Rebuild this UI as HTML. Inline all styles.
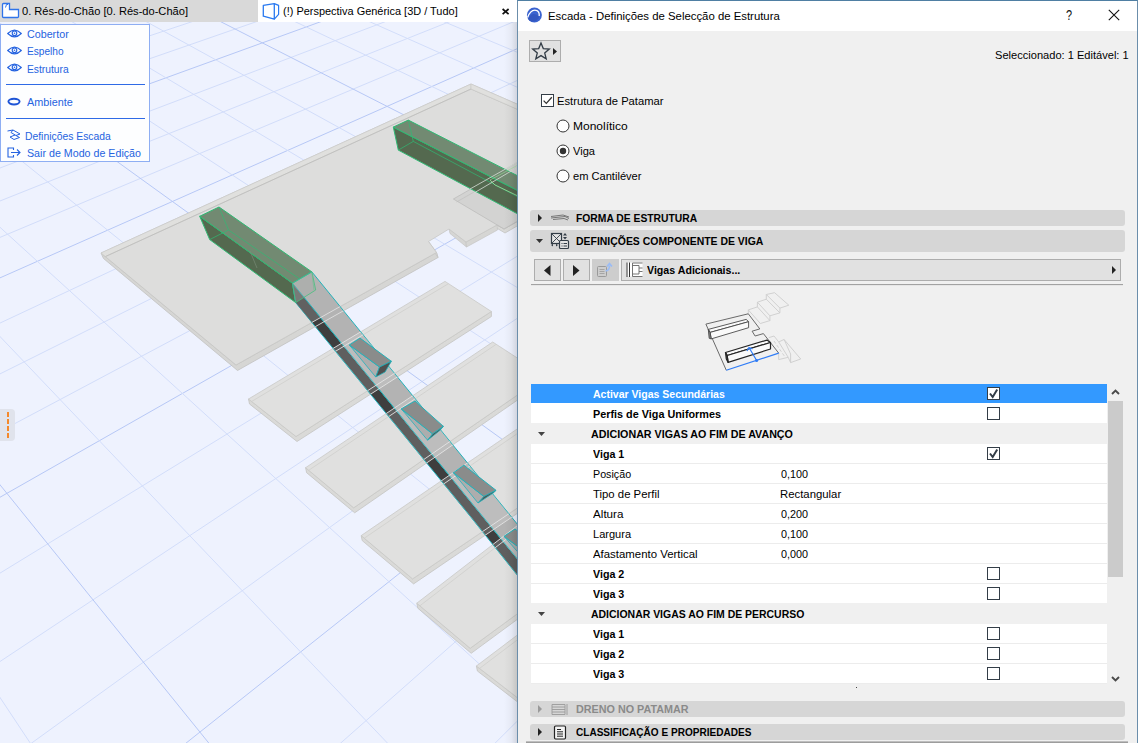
<!DOCTYPE html>
<html lang="pt"><head><meta charset="utf-8"><title>Escada</title>
<style>
html,body{margin:0;padding:0}
body{width:1138px;height:743px;overflow:hidden;position:relative;background:#f0f0f0;font-family:"Liberation Sans", sans-serif;}
.t{position:absolute;white-space:pre;line-height:1;transform-origin:0 0;font-family:"Liberation Sans", sans-serif;}
.abs{position:absolute}

.tabbar{position:absolute;left:0;top:0;width:518px;height:22px;background:#fff}
.tab1{position:absolute;left:0;top:0;width:258px;height:22px;background:#d9d9d9}
.menu{position:absolute;left:0;top:24px;width:148px;height:136px;background:#fdfeff;border:1px solid #8eaef3;box-sizing:content-box}
.sep{position:absolute;left:5.5px;width:139px;height:1px;background:#2f6ae6}
.handle{position:absolute;left:-4px;top:409px;width:19px;height:32px;border-radius:4px;background:#e0e3ec}
.dash{position:absolute;left:7px;width:2px;height:5px;background:#f5882a}
.shadow{position:absolute;left:504px;top:22px;width:13px;height:721px;background:linear-gradient(90deg,rgba(0,0,0,0) 0%,rgba(0,0,0,0.035) 55%,rgba(0,0,0,0.12) 100%)}
.dlg{position:absolute;left:517px;top:0;width:621px;height:743px;background:#f0f0f0;box-sizing:border-box;border-left:1px solid #6b8eab;border-right:1px solid #6b8eab;border-top:1px solid #4f7fa3}
.titlebar{position:absolute;left:518px;top:1px;width:619px;height:30px;background:#fff}
.btn{position:absolute;box-sizing:border-box;border:1px solid #adadad;background:#e1e1e1}
.hdr{position:absolute;left:530px;width:595px;background:#d6d6d6;border-radius:3px}
.row{position:absolute;left:531px;width:576px;height:19px;background:#fff;border-bottom:1px solid #ececec}
.row.g{background:#f0f0f0;border-bottom-color:#f0f0f0}
.row.sel{background:#3399ff;border-bottom-color:#fff}
.row.pg{border-bottom-color:#f0f0f0}
.cbt{border-width:1px !important}
.cb{position:absolute;box-sizing:border-box;width:13px;height:13px;border:1.5px solid #333d47;background:#fff}

</style></head><body>
<svg id="scene" width="518" height="743" viewBox="0 0 518 743" style="position:absolute;left:0;top:0">
<rect x="0" y="0" width="518" height="743" fill="#eef2fe"/>
<line x1="197.1" y1="20" x2="-2027.9" y2="760" stroke="#d2ddfa" stroke-width="1"/>
<line x1="261.2" y1="20" x2="-1871.3" y2="760" stroke="#d2ddfa" stroke-width="1"/>
<line x1="325.4" y1="20" x2="-1714.7" y2="760" stroke="#b7c8f6" stroke-width="1"/>
<line x1="389.5" y1="20" x2="-1558.0" y2="760" stroke="#d2ddfa" stroke-width="1"/>
<line x1="453.7" y1="20" x2="-1401.4" y2="760" stroke="#d2ddfa" stroke-width="1"/>
<line x1="517.8" y1="20" x2="-1244.8" y2="760" stroke="#d2ddfa" stroke-width="1"/>
<line x1="582.0" y1="20" x2="-1088.2" y2="760" stroke="#b7c8f6" stroke-width="1"/>
<line x1="646.1" y1="20" x2="-931.5" y2="760" stroke="#d2ddfa" stroke-width="1"/>
<line x1="710.3" y1="20" x2="-774.9" y2="760" stroke="#d2ddfa" stroke-width="1"/>
<line x1="774.4" y1="20" x2="-618.3" y2="760" stroke="#d2ddfa" stroke-width="1"/>
<line x1="838.6" y1="20" x2="-461.7" y2="760" stroke="#b7c8f6" stroke-width="1"/>
<line x1="902.8" y1="20" x2="-305.0" y2="760" stroke="#d2ddfa" stroke-width="1"/>
<line x1="966.9" y1="20" x2="-148.4" y2="760" stroke="#d2ddfa" stroke-width="1"/>
<line x1="1031.1" y1="20" x2="8.2" y2="760" stroke="#d2ddfa" stroke-width="1"/>
<line x1="1095.2" y1="20" x2="164.8" y2="760" stroke="#b7c8f6" stroke-width="1"/>
<line x1="1159.4" y1="20" x2="321.5" y2="760" stroke="#d2ddfa" stroke-width="1"/>
<line x1="1223.5" y1="20" x2="478.1" y2="760" stroke="#d2ddfa" stroke-width="1"/>
<line x1="1287.7" y1="20" x2="634.7" y2="760" stroke="#d2ddfa" stroke-width="1"/>
<line x1="1351.8" y1="20" x2="791.3" y2="760" stroke="#b7c8f6" stroke-width="1"/>
<line x1="1416.0" y1="20" x2="947.9" y2="760" stroke="#d2ddfa" stroke-width="1"/>
<line x1="-969.1" y1="20" x2="-1225.9" y2="760" stroke="#b7c8f6" stroke-width="1"/>
<line x1="-895.0" y1="20" x2="-1044.8" y2="760" stroke="#d2ddfa" stroke-width="1"/>
<line x1="-820.8" y1="20" x2="-863.8" y2="760" stroke="#d2ddfa" stroke-width="1"/>
<line x1="-746.7" y1="20" x2="-682.7" y2="760" stroke="#d2ddfa" stroke-width="1"/>
<line x1="-672.5" y1="20" x2="-501.7" y2="760" stroke="#b7c8f6" stroke-width="1"/>
<line x1="-598.3" y1="20" x2="-320.6" y2="760" stroke="#d2ddfa" stroke-width="1"/>
<line x1="-524.2" y1="20" x2="-139.6" y2="760" stroke="#d2ddfa" stroke-width="1"/>
<line x1="-450.0" y1="20" x2="41.5" y2="760" stroke="#d2ddfa" stroke-width="1"/>
<line x1="-375.8" y1="20" x2="222.5" y2="760" stroke="#b7c8f6" stroke-width="1"/>
<line x1="-301.7" y1="20" x2="403.6" y2="760" stroke="#d2ddfa" stroke-width="1"/>
<line x1="-227.5" y1="20" x2="584.7" y2="760" stroke="#d2ddfa" stroke-width="1"/>
<line x1="-153.4" y1="20" x2="765.7" y2="760" stroke="#d2ddfa" stroke-width="1"/>
<line x1="-79.2" y1="20" x2="946.8" y2="760" stroke="#b7c8f6" stroke-width="1"/>
<line x1="-5.0" y1="20" x2="1127.8" y2="760" stroke="#d2ddfa" stroke-width="1"/>
<line x1="69.1" y1="20" x2="1308.9" y2="760" stroke="#d2ddfa" stroke-width="1"/>
<line x1="143.3" y1="20" x2="1489.9" y2="760" stroke="#d2ddfa" stroke-width="1"/>
<line x1="217.4" y1="20" x2="1671.0" y2="760" stroke="#b7c8f6" stroke-width="1"/>
<line x1="291.6" y1="20" x2="1852.0" y2="760" stroke="#d2ddfa" stroke-width="1"/>
<line x1="365.8" y1="20" x2="2033.1" y2="760" stroke="#d2ddfa" stroke-width="1"/>
<line x1="439.9" y1="20" x2="2214.2" y2="760" stroke="#d2ddfa" stroke-width="1"/>
<line x1="514.1" y1="20" x2="2395.2" y2="760" stroke="#b7c8f6" stroke-width="1"/>
<line x1="588.3" y1="20" x2="2576.3" y2="760" stroke="#d2ddfa" stroke-width="1"/>
<polygon points="476.4,666.0 536.0,712.0 760.0,545.0 760.0,550.0 537.0,717.0 477.4,671.0" fill="#dadad8" stroke="#c4c4c2" stroke-width="0.8" stroke-linejoin="round" />
<polygon points="476.4,666.0 700.0,497.0 760.0,545.0 536.0,712.0" fill="#e0e0df" stroke="#c9c9c7" stroke-width="0.8" stroke-linejoin="round" />
<polyline points="479.6,668.4 703.2,499.4" fill="none" stroke="#cfcfcd" stroke-width="0.8" />
<polygon points="416.8,603.2 470.2,648.3 700.0,480.0 700.0,485.0 471.2,653.3 417.8,608.2" fill="#dadad8" stroke="#c4c4c2" stroke-width="0.8" stroke-linejoin="round" />
<polygon points="416.8,603.2 640.0,431.0 700.0,480.0 470.2,648.3" fill="#e0e0df" stroke="#c9c9c7" stroke-width="0.8" stroke-linejoin="round" />
<polyline points="419.9,605.8 643.1,433.6" fill="none" stroke="#cfcfcd" stroke-width="0.8" />
<polygon points="361.2,535.6 412.6,578.9 640.0,425.0 640.0,430.0 413.6,583.9 362.2,540.6" fill="#dadad8" stroke="#c4c4c2" stroke-width="0.8" stroke-linejoin="round" />
<polygon points="361.2,535.6 580.0,386.0 640.0,425.0 412.6,578.9" fill="#e0e0df" stroke="#c9c9c7" stroke-width="0.8" stroke-linejoin="round" />
<polyline points="364.3,538.2 583.1,388.6" fill="none" stroke="#cfcfcd" stroke-width="0.8" />
<polygon points="305.6,467.7 353.7,507.8 545.0,376.0 545.0,381.0 354.7,512.8 306.6,472.7" fill="#dadad8" stroke="#c4c4c2" stroke-width="0.8" stroke-linejoin="round" />
<polygon points="305.6,467.7 492.7,342.0 545.0,376.0 353.7,507.8" fill="#e0e0df" stroke="#c9c9c7" stroke-width="0.8" stroke-linejoin="round" />
<polyline points="308.7,470.3 495.8,344.6" fill="none" stroke="#cfcfcd" stroke-width="0.8" />
<polygon points="248.5,399.0 296.0,436.5 491.4,311.5 491.4,316.5 297.0,441.5 249.5,404.0" fill="#dadad8" stroke="#c4c4c2" stroke-width="0.8" stroke-linejoin="round" />
<polygon points="248.5,399.0 445.0,281.4 491.4,311.5 296.0,436.5" fill="#e0e0df" stroke="#c9c9c7" stroke-width="0.8" stroke-linejoin="round" />
<polyline points="251.6,401.5 448.1,283.9" fill="none" stroke="#cfcfcd" stroke-width="0.8" />
<polygon points="453.4,199.0 504.0,229.0 590.0,180.0 590.0,184.0 505.0,233.0 454.4,203.0" fill="#dadad8" stroke="#c4c4c2" stroke-width="0.8" stroke-linejoin="round" />
<polygon points="453.4,199.0 540.0,148.0 590.0,180.0 504.0,229.0" fill="#e0e0df" stroke="#c9c9c7" stroke-width="0.8" stroke-linejoin="round" />
<polyline points="456.8,201.0 543.4,150.0" fill="none" stroke="#cfcfcd" stroke-width="0.8" />
<polygon points="101.0,253.0 236.0,365.0 436.5,252.5 438.0,257.5 237.5,370.5 103.5,258.5" fill="#d6d6d4" stroke="#c2c2c0" stroke-width="0.8" stroke-linejoin="round" />
<polygon points="449.0,229.0 466.0,242.0 466.5,247.0 450.0,233.5" fill="#d6d6d4" stroke="#c6c6c4" stroke-width="0.7" stroke-linejoin="round" />
<polygon points="466.0,242.0 497.0,225.0 497.5,230.0 466.5,247.0" fill="#d6d6d4" stroke="#c6c6c4" stroke-width="0.7" stroke-linejoin="round" />
<polygon points="428.5,241.5 436.5,252.5 438.0,257.5 430.0,246.0" fill="#d6d6d4" stroke="#c6c6c4" stroke-width="0.7" stroke-linejoin="round" />
<polygon points="101.0,253.0 471.0,84.0 518.0,104.5 518.0,221.0 504.0,229.0 497.0,225.0 466.0,242.0 449.0,229.0 428.5,241.5 436.5,252.5 236.0,365.0" fill="#dddddc" stroke="#c6c6c4" stroke-width="0.8" stroke-linejoin="round" />
<polygon points="101.0,253.0 471.0,84.0 471.0,89.0 105.5,256.5" fill="#e0e0de" stroke="#c9c9c7" stroke-width="0.6" stroke-linejoin="round" />
<polyline points="105.5,256.5 471.0,89.0 518.0,109.5" fill="none" stroke="#bdbdbb" stroke-width="0.8" />
<polygon points="471.0,84.0 518.0,104.5 518.0,109.5 471.0,89.0" fill="#e0e0de" stroke="#c9c9c7" stroke-width="0.6" stroke-linejoin="round" />
<polygon points="453.4,199.0 518.0,162.0 518.0,221.0 504.0,229.0" fill="#cbcbca" stroke="#bdbdbb" stroke-width="0.8" stroke-linejoin="round" fill-opacity="0.55"/>
<polyline points="456.5,202.0 518.0,167.0" fill="none" stroke="#c0c0be" stroke-width="0.7" />
<polygon points="199.7,216.3 292.5,283.2 295.7,302.6 209.7,239.6" fill="#54694f" stroke="#2fba74" stroke-width="1" stroke-linejoin="round" />
<polygon points="199.7,216.3 219.0,207.0 311.9,271.9 292.5,283.2" fill="#728a72" stroke="#2fba74" stroke-width="1" stroke-linejoin="round" />
<polyline points="219.0,207.0 228.5,230.0 209.7,239.6" fill="none" stroke="#2fba74" stroke-width="0.7" />
<polyline points="228.5,230.0 315.7,290.0" fill="none" stroke="#2fba74" stroke-width="0.7" />
<polyline points="250.0,251.0 257.0,268.0" fill="none" stroke="#7d917c" stroke-width="0.6" />
<polygon points="393.3,127.1 518.0,190.7 518.0,214.1 398.3,150.1" fill="#54694f" stroke="#2fba74" stroke-width="1" stroke-linejoin="round" />
<polygon points="393.3,127.1 408.3,120.1 518.0,176.0 518.0,190.7" fill="#728a72" stroke="#2fba74" stroke-width="1" stroke-linejoin="round" />
<polyline points="408.3,120.1 413.3,141.4 398.3,150.1" fill="none" stroke="#2fba74" stroke-width="0.7" />
<polyline points="413.3,141.4 518.0,197.0" fill="none" stroke="#2fba74" stroke-width="0.7" />
<polyline points="470.0,189.0 518.0,162.0" fill="none" stroke="#d8e0d8" stroke-width="0.8" />
<polyline points="474.0,193.0 518.0,167.0" fill="none" stroke="#d8e0d8" stroke-width="0.8" />
<polyline points="490.0,180.0 495.0,185.0 518.0,196.0" fill="none" stroke="#9ee09e" stroke-width="0.8" />
<polyline points="490.0,180.0 518.0,165.0" fill="none" stroke="#9ee09e" stroke-width="0.6" />
<defs><clipPath id="cs"><polygon points="292.5,283.2 295.7,302.6 470.0,516.0 518.0,576.0 518.0,559.7 482.4,516.0"/><polygon points="292.5,283.2 311.9,271.9 510.7,516.0 518.0,525.0 518.0,559.7 482.4,516.0"/></clipPath><clipPath id="cslab"><polygon points="101.0,253.0 471.0,84.0 518.0,104.5 518.0,221.0 504.0,229.0 497.0,225.0 466.0,242.0 449.0,229.0 428.5,241.5 436.5,252.5 236.0,365.0"/></clipPath></defs>
<polygon points="292.5,283.2 295.7,302.6 470.0,516.0 518.0,576.0 518.0,559.7 482.4,516.0" fill="#3e3e3e" stroke="#22b3bb" stroke-width="1" stroke-linejoin="round" />
<polygon points="292.5,283.2 295.7,302.6 470.0,516.0 518.0,576.0 518.0,559.7 482.4,516.0" fill="#6a6a6a" clip-path="url(#cslab)" fill-opacity="0.8"/>
<polygon points="292.5,283.2 311.9,271.9 510.7,516.0 518.0,525.0 518.0,559.7 482.4,516.0" fill="#b3b3b3" stroke="#22b3bb" stroke-width="1" stroke-linejoin="round" />
<polygon points="292.5,283.2 311.9,271.9 315.7,290.0 295.7,302.6" fill="#a3aaa3" fill-opacity="0.35"/>
<polyline points="292.5,283.2 311.9,271.9 315.7,290.0 295.7,302.6 292.5,283.2" fill="none" stroke="#45c07e" stroke-width="0.8" />
<polyline points="311.9,271.9 314.0,290.0" fill="none" stroke="#6cc08e" stroke-width="0.6" />
<g clip-path="url(#cs)">
<polygon points="476.4,666.0 700.0,497.0 760.0,545.0 760.0,550.0 537.0,717.0 536.0,712.0" fill="#e6e6e6" fill-opacity="0.2"/>
<polyline points="476.4,666.0 700.0,497.0" fill="none" stroke="#e4e4e4" stroke-width="0.9" />
<polyline points="479.6,668.4 703.2,499.4" fill="none" stroke="#e4e4e4" stroke-width="0.9" />
<polyline points="536.0,712.0 760.0,545.0" fill="none" stroke="#e4e4e4" stroke-width="0.9" />
<polyline points="537.0,717.0 760.0,550.0" fill="none" stroke="#e4e4e4" stroke-width="0.9" />
<polygon points="416.8,603.2 640.0,431.0 700.0,480.0 700.0,485.0 471.2,653.3 470.2,648.3" fill="#e6e6e6" fill-opacity="0.2"/>
<polyline points="416.8,603.2 640.0,431.0" fill="none" stroke="#e4e4e4" stroke-width="0.9" />
<polyline points="419.9,605.8 643.1,433.6" fill="none" stroke="#e4e4e4" stroke-width="0.9" />
<polyline points="470.2,648.3 700.0,480.0" fill="none" stroke="#e4e4e4" stroke-width="0.9" />
<polyline points="471.2,653.3 700.0,485.0" fill="none" stroke="#e4e4e4" stroke-width="0.9" />
<polygon points="361.2,535.6 580.0,386.0 640.0,425.0 640.0,430.0 413.6,583.9 412.6,578.9" fill="#e6e6e6" fill-opacity="0.2"/>
<polyline points="361.2,535.6 580.0,386.0" fill="none" stroke="#e4e4e4" stroke-width="0.9" />
<polyline points="364.3,538.2 583.1,388.6" fill="none" stroke="#e4e4e4" stroke-width="0.9" />
<polyline points="412.6,578.9 640.0,425.0" fill="none" stroke="#e4e4e4" stroke-width="0.9" />
<polyline points="413.6,583.9 640.0,430.0" fill="none" stroke="#e4e4e4" stroke-width="0.9" />
<polygon points="305.6,467.7 492.7,342.0 545.0,376.0 545.0,381.0 354.7,512.8 353.7,507.8" fill="#e6e6e6" fill-opacity="0.2"/>
<polyline points="305.6,467.7 492.7,342.0" fill="none" stroke="#e4e4e4" stroke-width="0.9" />
<polyline points="308.7,470.3 495.8,344.6" fill="none" stroke="#e4e4e4" stroke-width="0.9" />
<polyline points="353.7,507.8 545.0,376.0" fill="none" stroke="#e4e4e4" stroke-width="0.9" />
<polyline points="354.7,512.8 545.0,381.0" fill="none" stroke="#e4e4e4" stroke-width="0.9" />
<polygon points="248.5,399.0 445.0,281.4 491.4,311.5 491.4,316.5 297.0,441.5 296.0,436.5" fill="#e6e6e6" fill-opacity="0.2"/>
<polyline points="248.5,399.0 445.0,281.4" fill="none" stroke="#e4e4e4" stroke-width="0.9" />
<polyline points="251.6,401.5 448.1,283.9" fill="none" stroke="#e4e4e4" stroke-width="0.9" />
<polyline points="296.0,436.5 491.4,311.5" fill="none" stroke="#e4e4e4" stroke-width="0.9" />
<polyline points="297.0,441.5 491.4,316.5" fill="none" stroke="#e4e4e4" stroke-width="0.9" />
<polyline points="236.0,365.0 436.5,252.5" fill="none" stroke="#e0e0e0" stroke-width="0.9" />
<polyline points="237.5,370.5 438.0,257.5" fill="none" stroke="#e0e0e0" stroke-width="0.9" />
</g>
<polygon points="349.4,345.0 379.5,367.0 375.7,377.0" fill="#adadad" stroke="#22b3bb" stroke-width="0.8" stroke-linejoin="round" /><polygon points="349.4,345.0 360.0,338.1 391.4,361.3 379.5,367.0" fill="#8a8c8b" stroke="#22b3bb" stroke-width="1" stroke-linejoin="round" /><polygon points="379.5,367.0 391.4,361.3 385.1,372.0 375.7,377.0" fill="#505050" stroke="#22b3bb" stroke-width="0.8" stroke-linejoin="round" />
<polygon points="401.3,408.9 432.6,433.9 427.6,440.2" fill="#adadad" stroke="#22b3bb" stroke-width="0.8" stroke-linejoin="round" /><polygon points="401.3,408.9 415.0,401.0 443.4,426.4 432.6,433.9" fill="#8a8c8b" stroke="#22b3bb" stroke-width="1" stroke-linejoin="round" /><polygon points="432.6,433.9 443.4,426.4 440.1,430.2 427.6,440.2" fill="#505050" stroke="#22b3bb" stroke-width="0.8" stroke-linejoin="round" />
<polygon points="453.4,472.7 483.9,496.5 478.0,503.0" fill="#adadad" stroke="#22b3bb" stroke-width="0.8" stroke-linejoin="round" /><polygon points="453.4,472.7 463.9,465.2 496.0,490.3 483.9,496.5" fill="#8a8c8b" stroke="#22b3bb" stroke-width="1" stroke-linejoin="round" /><polygon points="483.9,496.5 496.0,490.3 494.0,492.5 478.0,503.0" fill="#505050" stroke="#22b3bb" stroke-width="0.8" stroke-linejoin="round" />
<polygon points="504.0,536.3 536.0,560.0 530.0,566.0" fill="#adadad" stroke="#22b3bb" stroke-width="0.8" stroke-linejoin="round" /><polygon points="504.0,536.3 515.0,529.0 548.0,554.0 536.0,560.0" fill="#8a8c8b" stroke="#22b3bb" stroke-width="1" stroke-linejoin="round" /><polygon points="536.0,560.0 548.0,554.0 546.0,556.0 530.0,566.0" fill="#505050" stroke="#22b3bb" stroke-width="0.8" stroke-linejoin="round" />
</svg>

<div class="tabbar"></div><div class="tab1"></div>
<svg class="abs" style="left:1px;top:2px" width="19" height="17" viewBox="0 0 19 17"><path d="M1.5 2.5 Q1.5 1.5 2.5 1.5 H8.5 V7.5 H17.5 V14.5 Q17.5 15.5 16.5 15.5 H2.5 Q1.5 15.5 1.5 14.5 Z" fill="#fff" stroke="#2f74ea" stroke-width="1.3"/><path d="M4.5 5.5 L5.5 2.5 H7" fill="none" stroke="#2f74ea" stroke-width="1"/></svg>
<svg class="abs" style="left:260px;top:0px" width="22" height="22" viewBox="260 0 22 22"><path d="M263.3 5.4 L274.3 3.6 L274.3 19.2 L263.3 16.2 Z" fill="#fff" stroke="#2979f0" stroke-width="1.3" stroke-linejoin="round"/><path d="M274.3 3.6 L278.6 5.4 L278.6 14.4 L274.3 19.2" fill="none" stroke="#2979f0" stroke-width="1.2" stroke-linejoin="round"/></svg>
<svg class="abs" style="left:501px;top:7px" width="9" height="9" viewBox="0 0 9 9"><path d="M1.6 2 L7.6 7.2 M7.6 2 L1.6 7.2" stroke="#111" stroke-width="1.7"/></svg>
<div class="menu"></div>
<svg class="abs" style="left:7px;top:29px" width="15" height="9" viewBox="0 0 15 9"><path d="M0.7 4.5 Q7.5 -2.2 14.3 4.5 Q7.5 11.2 0.7 4.5 Z" fill="none" stroke="#2563e0" stroke-width="1.1"/><circle cx="7.5" cy="4.3" r="2.3" fill="none" stroke="#2563e0" stroke-width="1.1"/><circle cx="7.5" cy="4.3" r="0.8" fill="#2563e0"/></svg><svg class="abs" style="left:7px;top:46px" width="15" height="9" viewBox="0 0 15 9"><path d="M0.7 4.5 Q7.5 -2.2 14.3 4.5 Q7.5 11.2 0.7 4.5 Z" fill="none" stroke="#2563e0" stroke-width="1.1"/><circle cx="7.5" cy="4.3" r="2.3" fill="none" stroke="#2563e0" stroke-width="1.1"/><circle cx="7.5" cy="4.3" r="0.8" fill="#2563e0"/></svg><svg class="abs" style="left:7px;top:63px" width="15" height="9" viewBox="0 0 15 9"><path d="M0.7 4.5 Q7.5 -2.2 14.3 4.5 Q7.5 11.2 0.7 4.5 Z" fill="none" stroke="#2563e0" stroke-width="1.1"/><circle cx="7.5" cy="4.3" r="2.3" fill="none" stroke="#2563e0" stroke-width="1.1"/><circle cx="7.5" cy="4.3" r="0.8" fill="#2563e0"/></svg>
<svg class="abs" style="left:7px;top:97px" width="15" height="9" viewBox="0 0 15 9"><ellipse cx="7" cy="4.6" rx="5.6" ry="2.9" fill="none" stroke="#1f55d6" stroke-width="1.9"/></svg>
<div class="sep" style="top:84px"></div><div class="sep" style="top:118px"></div>
<svg class="abs" style="left:7px;top:129px" width="15" height="12" viewBox="0 0 15 12"><path d="M0.5 2 L6 1 L13 5 L9 6.5 L12.5 8.5 L7 10.5 L3 8 M6 1 L4 3.5 L9 6.5 M3 8 L8 6" fill="none" stroke="#2563e0" stroke-width="1"/></svg>
<svg class="abs" style="left:7px;top:146px" width="15" height="12" viewBox="0 0 15 12"><path d="M6.5 4 V2 H1 V11 H6.5 V9" fill="none" stroke="#2563e0" stroke-width="1.1"/><path d="M4 6.5 H13 M10 3.5 L13 6.5 L10 9.5" fill="none" stroke="#2563e0" stroke-width="1.1"/></svg>
<div class="handle"></div>
<div class="dash" style="top:412px"></div><div class="dash" style="top:419px"></div><div class="dash" style="top:426px"></div><div class="dash" style="top:433px"></div>
<div class="shadow"></div>


<div class="dlg"></div><div class="titlebar"></div>
<svg class="abs" style="left:526px;top:7px" width="17" height="17" viewBox="0 0 17 17"><circle cx="8.4" cy="8" r="7.5" fill="#3a63cf"/><path d="M1.6 10.5 Q5 1.5 11 3.6 Q13.6 4.8 13.2 9" fill="none" stroke="#fff" stroke-width="1.3"/><path d="M2 12 Q6 4 12.5 9 L13 11 Q9 16 4 14 Z" fill="#3257c0"/></svg>
<span class="t" style="left:1066.3px;top:7.6px;font-size:14px;color:#111;transform:scaleX(0.78)">?</span>
<svg class="abs" style="left:1108px;top:9px" width="12" height="12" viewBox="0 0 12 12"><path d="M0.8 0.8 L11.2 11.2 M11.2 0.8 L0.8 11.2" stroke="#111" stroke-width="1.1"/></svg>
<div class="btn" style="left:529px;top:40px;width:32px;height:22px"></div>
<svg class="abs" style="left:531px;top:41px" width="20" height="20" viewBox="0 0 20 20"><path d="M10 2 L12.3 7.6 L18.3 8 L13.7 11.9 L15.2 17.8 L10 14.6 L4.8 17.8 L6.3 11.9 L1.7 8 L7.7 7.6 Z" fill="none" stroke="#333d47" stroke-width="1.3" stroke-linejoin="miter"/></svg>
<svg class="abs" style="left:553px;top:47.5px" width="4" height="7" viewBox="0 0 4 7"><polygon points="0,0 4,3.5 0,7" fill="#222"/></svg>
<div class="cb cbt" style="left:541px;top:94px"></div><svg class="abs" style="left:541px;top:94px" width="13" height="13" viewBox="0 0 13 13"><path d="M2.6 6.6 L5.3 9.4 L10.8 3.2" fill="none" stroke="#333" stroke-width="1.3"/></svg>
<svg class="abs" style="left:555.5px;top:118.5px" width="14" height="14" viewBox="0 0 14 14"><circle cx="7" cy="7" r="6" fill="#fff" stroke="#333" stroke-width="1"/></svg><svg class="abs" style="left:555.5px;top:143.5px" width="14" height="14" viewBox="0 0 14 14"><circle cx="7" cy="7" r="6" fill="#fff" stroke="#333" stroke-width="1"/><circle cx="7" cy="7" r="3.2" fill="#333"/></svg><svg class="abs" style="left:555.5px;top:168.5px" width="14" height="14" viewBox="0 0 14 14"><circle cx="7" cy="7" r="6" fill="#fff" stroke="#333" stroke-width="1"/></svg>
<div class="hdr" style="top:210px;height:16px"></div>
<div class="hdr" style="top:230px;height:22px"></div>
<svg class="abs" style="left:538px;top:214px" width="4" height="8" viewBox="0 0 4 8"><polygon points="0,0 4,4.0 0,8" fill="#222"/></svg>
<svg class="abs" style="left:536px;top:239px" width="7" height="4" viewBox="0 0 7 4"><polygon points="0,0 7,0 3.5,4" fill="#333"/></svg>
<svg class="abs" style="left:550px;top:213px" width="20" height="9" viewBox="0 0 20 9"><path d="M1 3.5 L13 2 L19 4 M1 5 L15 3.5 L19 5.5 M3 6.5 L14 5.5 L18 7" fill="none" stroke="#777" stroke-width="1"/></svg>
<svg class="abs" style="left:550px;top:232px" width="20" height="18" viewBox="0 0 20 18"><rect x="1.5" y="1.5" width="10" height="10" fill="#e4e4e4" stroke="#333d47" stroke-width="1.2"/><path d="M1.5 1.5 L11.5 11.5 M11.5 1.5 L1.5 11.5" stroke="#333d47" stroke-width="0.9"/><rect x="9.5" y="8.5" width="9" height="8" rx="1" fill="#e4e4e4" stroke="#333d47" stroke-width="1.2"/><path d="M11.5 11.5 H12.5 M13.5 11.5 H17 M11.5 14 H12.5 M13.5 14 H17" stroke="#333d47" stroke-width="1"/><path d="M13 3.5 L15 1 L17 3.5 Z M13 5 L15 7.5 L17 5 Z" fill="#333d47"/><path d="M1 13 L3 14.5 L3 11.8 Z M8 13 L6 14.5 L6 11.8 Z" fill="#333d47"/></svg>
<div class="btn" style="left:534px;top:259px;width:27px;height:22px"></div>
<div class="btn" style="left:563px;top:259px;width:27px;height:22px"></div>
<div class="btn" style="left:592px;top:259px;width:27px;height:22px;background:#cdcdcd;border-color:#cdcdcd"></div>
<div class="btn" style="left:621px;top:259px;width:500px;height:22px"></div>
<svg class="abs" style="left:544px;top:264.5px" width="6.5" height="11" viewBox="0 0 6.5 11"><polygon points="6.5,0 0,5.5 6.5,11" fill="#222"/></svg>
<svg class="abs" style="left:573px;top:264.5px" width="6.5" height="11" viewBox="0 0 6.5 11"><polygon points="0,0 6.5,5.5 0,11" fill="#222"/></svg>
<svg class="abs" style="left:1112px;top:266px" width="4" height="8" viewBox="0 0 4 8"><polygon points="0,0 4,4.0 0,8" fill="#222"/></svg>
<svg class="abs" style="left:596px;top:261px" width="20" height="18" viewBox="0 0 20 18"><rect x="1.5" y="5.5" width="9" height="10" rx="1" fill="none" stroke="#9a9a9a" stroke-width="1"/><path d="M3.5 8.5 H8.5 M3.5 10.5 H8.5 M3.5 12.5 H8.5" stroke="#9a9a9a" stroke-width="0.8"/><path d="M9.5 10 Q13.5 9.5 13.5 4.5 M11 5.5 L13.5 2.5 L16 5.5" fill="none" stroke="#9bbcf5" stroke-width="1.6"/></svg>
<svg class="abs" style="left:626px;top:262px" width="18" height="16" viewBox="0 0 18 16"><rect x="0.5" y="0.5" width="16" height="14" fill="#fff" stroke="none"/><path d="M1 0.5 V15 M3.5 0.5 V15" stroke="#333" stroke-width="1"/><path d="M6.5 1 H16.5 M6.5 14.5 H16.5 M6.5 1 V14.5 M6.5 3.5 H13 V12 H6.5 M13 6 H16.5 M13 9.5 H16.5" fill="none" stroke="#666" stroke-width="0.9"/></svg>
<div class="abs" style="left:531px;top:284px;width:592px;height:1px;background:#a2a2a2"></div>
<div class="abs" style="left:531px;top:285px;width:592px;height:1px;background:#e6e6e6"></div>

<svg class="abs" style="left:700px;top:288px" width="110" height="90" viewBox="700 288 110 90">
<g fill="none" stroke="#cdcdcd" stroke-width="0.9" stroke-linejoin="round">
<path d="M748.3 313.8 V309.9 L757.4 306.9 V302.2 L766.3 299.2 V294.5 L774.6 292.7 L788.8 305.2 L779.9 308.1 V312.9 L769.9 315.8 V320.6 L760.4 323.5 L748.3 309.9"/>
<path d="M757.4 306.9 L769.9 320.6 M757.4 302.2 L769.9 315.8 M766.3 299.2 L779.9 312.9 M766.3 294.5 L779.9 308.1"/>
<path d="M768.7 337.7 L774 336 L778.7 341.9 L784.1 339.5 L800.7 359 L790.6 362.6 L788.2 357.3 L778.7 359.6 L778.7 353.1 M778.7 341.9 L788.2 357.3 M784.1 339.5 L790.6 354 L790.6 362.6"/>
<path d="M774 341 L785 357" stroke-dasharray="3 2"/>
</g>
<g fill="none" stroke="#5a5a5a" stroke-width="0.9" stroke-linejoin="round">
<path d="M726.3 370.3 L705.9 324.1 L748.3 313.8 L759.8 328.9 L752.1 331.2 L755.1 336 L763.4 333.6 L778.7 353.1"/>
</g>
<g fill="#fafafa" stroke="#4a4a4a" stroke-width="0.9" stroke-linejoin="round">
<path d="M708.3 329.4 L746.2 319.4 L748.6 321.7 L710.1 332.4 Z"/>
<path d="M710.1 332.4 L748.6 321.7 L748.6 327.7 L711.2 338.9 Z"/>
<path d="M708.3 329.4 L710.1 332.4 L711.2 338.9 L709.2 338.3 Z" fill="#888"/>
</g>
<g fill="#fafafa" stroke="#262626" stroke-width="1.2" stroke-linejoin="round">
<path d="M725.5 352.5 L766.9 340.1 L770.5 342.5 L727.2 355.5 Z"/>
<path d="M727.2 355.5 L770.5 342.5 L770.5 349 L728.1 362.4 Z"/>
<path d="M725.5 352.5 L727.2 355.5 L728.1 362.4 L726.3 359 Z" fill="#555"/>
</g>
<path d="M726.3 370.3 L778.7 353.1" stroke="#2f7cf6" stroke-width="1.2" fill="none"/>
<path d="M756.5 360.2 L749 347.5 M747 351 L749 347.5 L752.5 349" stroke="#2f7cf6" stroke-width="1.2" fill="none"/>
<circle cx="756.6" cy="360.4" r="1.5" fill="#2f7cf6"/>
</svg>

<div class="row sel" style="top:384px"></div>
<div class="cb" style="left:987px;top:387px"></div><svg class="abs" style="left:987px;top:387px" width="13" height="13" viewBox="0 0 13 13"><path d="M3 6.5 L5.7 10 L10.2 2.6" fill="none" stroke="#333d47" stroke-width="2"/></svg>
<div class="row pg" style="top:404px"></div>
<div class="cb" style="left:987px;top:407px"></div>
<div class="row g" style="top:424px"></div>
<svg class="abs" style="left:538px;top:432px" width="7" height="4" viewBox="0 0 7 4"><polygon points="0,0 7,0 3.5,4" fill="#444"/></svg>
<div class="row" style="top:444px"></div>
<div class="cb" style="left:987px;top:447px"></div><svg class="abs" style="left:987px;top:447px" width="13" height="13" viewBox="0 0 13 13"><path d="M3 6.5 L5.7 10 L10.2 2.6" fill="none" stroke="#333d47" stroke-width="2"/></svg>
<div class="row" style="top:464px"></div>
<div class="row" style="top:484px"></div>
<div class="row" style="top:504px"></div>
<div class="row" style="top:524px"></div>
<div class="row" style="top:544px"></div>
<div class="row" style="top:564px"></div>
<div class="cb" style="left:987px;top:567px"></div>
<div class="row pg" style="top:584px"></div>
<div class="cb" style="left:987px;top:587px"></div>
<div class="row g" style="top:604px"></div>
<svg class="abs" style="left:538px;top:612px" width="7" height="4" viewBox="0 0 7 4"><polygon points="0,0 7,0 3.5,4" fill="#444"/></svg>
<div class="row" style="top:624px"></div>
<div class="cb" style="left:987px;top:627px"></div>
<div class="row" style="top:644px"></div>
<div class="cb" style="left:987px;top:647px"></div>
<div class="row" style="top:664px"></div>
<div class="cb" style="left:987px;top:667px"></div>
<div class="abs" style="left:1107px;top:384px;width:17px;height:300px;background:#f0f0f0"></div>
<div class="abs" style="left:1108px;top:401px;width:15px;height:176px;background:#cbcbcb"></div>
<svg class="abs" style="left:1111px;top:389px" width="9" height="6" viewBox="0 0 9 6"><path d="M1 5 L4.5 1.5 L8 5" fill="none" stroke="#4a4a4a" stroke-width="1.9"/></svg>
<svg class="abs" style="left:1111px;top:676px" width="9" height="6" viewBox="0 0 9 6"><path d="M1 1 L4.5 4.5 L8 1" fill="none" stroke="#4a4a4a" stroke-width="1.9"/></svg>
<div class="hdr" style="top:701px;height:16px"></div>
<div class="hdr" style="top:724px;height:16px"></div>
<svg class="abs" style="left:538px;top:705px" width="4" height="8" viewBox="0 0 4 8"><polygon points="0,0 4,4.0 0,8" fill="#9a9a9a"/></svg>
<svg class="abs" style="left:538px;top:728px" width="4" height="8" viewBox="0 0 4 8"><polygon points="0,0 4,4.0 0,8" fill="#222"/></svg>
<svg class="abs" style="left:551px;top:703px" width="18" height="13" viewBox="0 0 18 13"><path d="M1 1.5 H14 V11.5 H1 Z M1 4 H14 M1 6.5 H14 M1 9 H14 M16 1 V12" fill="none" stroke="#9a9a9a" stroke-width="0.9"/></svg>
<svg class="abs" style="left:553px;top:725px" width="14" height="15" viewBox="0 0 14 15"><rect x="1.5" y="1" width="11" height="13" rx="1.2" fill="#f4f4f4" stroke="#222" stroke-width="1.2"/><path d="M4 4.5 H8 M4 6.8 H10 M4 9 H10 M4 11.2 H10" stroke="#222" stroke-width="1"/></svg>
<div class="abs" style="left:856px;top:687px;width:1px;height:1px;background:#444"></div>
<div class="abs" style="left:526px;top:741px;width:602px;height:2px;background:linear-gradient(#cfcfcf,#8c8c8c)"></div>

<span class="t" style="left:22.2px;top:6.0px;font-size:11.5px;font-weight:400;color:#000;transform:scaleX(0.9654)">0. Rés-do-Chão [0. Rés-do-Chão]</span>
<span class="t" style="left:282.7px;top:6.0px;font-size:11.5px;font-weight:400;color:#000;transform:scaleX(0.9523)">(!) Perspectiva Genérica [3D / Tudo]</span>
<span class="t" style="left:27.0px;top:29.3px;font-size:11px;font-weight:400;color:#2563e0;transform:scaleX(0.9744)">Cobertor</span>
<span class="t" style="left:27.0px;top:46.4px;font-size:11px;font-weight:400;color:#2563e0;transform:scaleX(0.9204)">Espelho</span>
<span class="t" style="left:27.0px;top:63.5px;font-size:11px;font-weight:400;color:#2563e0;transform:scaleX(0.9341)">Estrutura</span>
<span class="t" style="left:27.0px;top:96.8px;font-size:11px;font-weight:400;color:#2563e0;transform:scaleX(0.9853)">Ambiente</span>
<span class="t" style="left:25.2px;top:131.1px;font-size:11px;font-weight:400;color:#2563e0;transform:scaleX(0.9417)">Definições Escada</span>
<span class="t" style="left:26.5px;top:148.3px;font-size:11px;font-weight:400;color:#2563e0;transform:scaleX(0.9709)">Sair de Modo de Edição</span>
<span class="t" style="left:547.6px;top:10.9px;font-size:11.5px;font-weight:400;color:#000;transform:scaleX(0.9880)">Escada - Definições de Selecção de Estrutura</span>
<span class="t" style="left:994.5px;top:50.1px;font-size:11.5px;font-weight:400;color:#000;transform:scaleX(0.9637)">Seleccionado: 1 Editável: 1</span>
<span class="t" style="left:557.4px;top:95.8px;font-size:11.5px;font-weight:400;color:#000;transform:scaleX(0.9743)">Estrutura de Patamar</span>
<span class="t" style="left:572.6px;top:120.8px;font-size:11.5px;font-weight:400;color:#000;transform:scaleX(1.0435)">Monolítico</span>
<span class="t" style="left:572.6px;top:145.8px;font-size:11.5px;font-weight:400;color:#000;transform:scaleX(0.9644)">Viga</span>
<span class="t" style="left:572.6px;top:170.8px;font-size:11.5px;font-weight:400;color:#000;transform:scaleX(0.9654)">em Cantiléver</span>
<span class="t" style="left:576.4px;top:213.0px;font-size:11.5px;font-weight:700;color:#000;transform:scaleX(0.8977)">FORMA DE ESTRUTURA</span>
<span class="t" style="left:576.4px;top:235.9px;font-size:11.5px;font-weight:700;color:#000;transform:scaleX(0.9080)">DEFINIÇÕES COMPONENTE DE VIGA</span>
<span class="t" style="left:647.3px;top:265.0px;font-size:11.5px;font-weight:700;color:#000;transform:scaleX(0.9239)">Vigas Adicionais...</span>
<span class="t" style="left:576.4px;top:704.1px;font-size:11.5px;font-weight:700;color:#8a8a8a;transform:scaleX(0.9366)">DRENO NO PATAMAR</span>
<span class="t" style="left:576.4px;top:727.1px;font-size:11.5px;font-weight:700;color:#000;transform:scaleX(0.8742)">CLASSIFICAÇÃO E PROPRIEDADES</span>
<span class="t" style="left:593.0px;top:388.8px;font-size:11.5px;font-weight:700;color:#fff;transform:scaleX(0.9137)">Activar Vigas Secundárias</span>
<span class="t" style="left:593.0px;top:408.8px;font-size:11.5px;font-weight:700;color:#000;transform:scaleX(0.9417)">Perfis de Viga Uniformes</span>
<span class="t" style="left:591.4px;top:428.8px;font-size:11.5px;font-weight:700;color:#000;transform:scaleX(0.9294)">ADICIONAR VIGAS AO FIM DE AVANÇO</span>
<span class="t" style="left:593.0px;top:448.8px;font-size:11.5px;font-weight:700;color:#000;transform:scaleX(0.9296)">Viga 1</span>
<span class="t" style="left:593.0px;top:468.8px;font-size:11.5px;font-weight:400;color:#000;transform:scaleX(0.9310)">Posição</span>
<span class="t" style="left:781.0px;top:468.8px;font-size:11.5px;font-weight:400;color:#000;transform:scaleX(0.9381)">0,100</span>
<span class="t" style="left:593.0px;top:488.8px;font-size:11.5px;font-weight:400;color:#000;transform:scaleX(0.9877)">Tipo de Perfil</span>
<span class="t" style="left:779.6px;top:488.8px;font-size:11.5px;font-weight:400;color:#000;transform:scaleX(0.9868)">Rectangular</span>
<span class="t" style="left:593.0px;top:508.8px;font-size:11.5px;font-weight:400;color:#000;transform:scaleX(1.0151)">Altura</span>
<span class="t" style="left:781.0px;top:508.8px;font-size:11.5px;font-weight:400;color:#000;transform:scaleX(0.9381)">0,200</span>
<span class="t" style="left:593.0px;top:528.8px;font-size:11.5px;font-weight:400;color:#000;transform:scaleX(0.9611)">Largura</span>
<span class="t" style="left:781.0px;top:528.8px;font-size:11.5px;font-weight:400;color:#000;transform:scaleX(0.9381)">0,100</span>
<span class="t" style="left:593.0px;top:548.8px;font-size:11.5px;font-weight:400;color:#000;transform:scaleX(0.9916)">Afastamento Vertical</span>
<span class="t" style="left:781.0px;top:548.8px;font-size:11.5px;font-weight:400;color:#000;transform:scaleX(0.9381)">0,000</span>
<span class="t" style="left:593.0px;top:568.8px;font-size:11.5px;font-weight:700;color:#000;transform:scaleX(0.9296)">Viga 2</span>
<span class="t" style="left:593.0px;top:588.8px;font-size:11.5px;font-weight:700;color:#000;transform:scaleX(0.9296)">Viga 3</span>
<span class="t" style="left:591.4px;top:608.8px;font-size:11.5px;font-weight:700;color:#000;transform:scaleX(0.9088)">ADICIONAR VIGAS AO FIM DE PERCURSO</span>
<span class="t" style="left:593.0px;top:628.8px;font-size:11.5px;font-weight:700;color:#000;transform:scaleX(0.9296)">Viga 1</span>
<span class="t" style="left:593.0px;top:648.8px;font-size:11.5px;font-weight:700;color:#000;transform:scaleX(0.9296)">Viga 2</span>
<span class="t" style="left:593.0px;top:668.8px;font-size:11.5px;font-weight:700;color:#000;transform:scaleX(0.9296)">Viga 3</span>
</body></html>
